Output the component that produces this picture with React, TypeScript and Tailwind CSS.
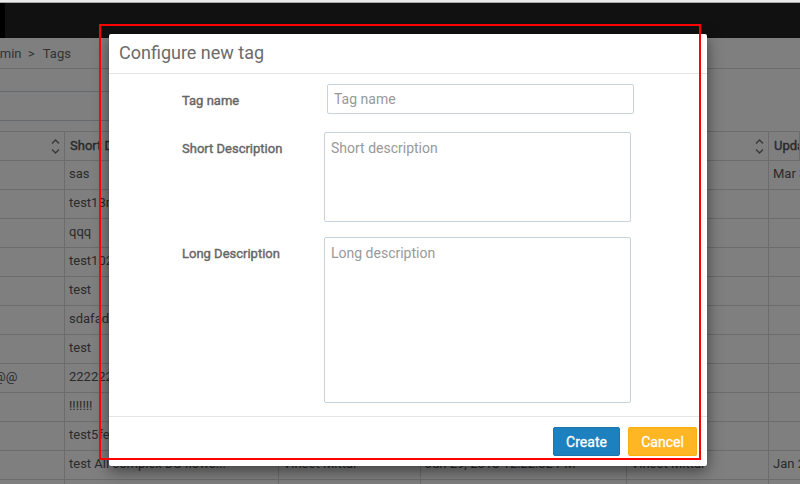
import type { ReactNode } from "react";

const descriptions = [
  "sas",
  "test13march",
  "qqq",
  "test102030",
  "test",
  "sdafadsfas",
  "test",
  "2222222222",
  "!!!!!!!",
  "test5feb",
  "test All complex DS flows...",
  "",
];

function SortIcon() {
  return (
    <svg width="9" height="15" viewBox="0 0 9 15" fill="none" stroke="#777" strokeWidth="1.5" aria-hidden="true">
      <path d="M1 4.5 4.5 1 8 4.5M1 10.5 4.5 14 8 10.5" />
    </svg>
  );
}

function HeadCell({ children, sortable = false }: { children?: ReactNode; sortable?: boolean }) {
  return (
    <th className="overflow-hidden border border-[#d8d8d8] pr-1 pl-[5px] text-left font-normal [-webkit-text-stroke:0.4px]">
      <div className="flex items-center justify-between">
        <span>{children}</span>
        {sortable && <SortIcon />}
      </div>
    </th>
  );
}

function Cell({ children }: { children?: ReactNode }) {
  return (
    <td className="overflow-hidden border border-[#d8d8d8] px-1 pb-0.5 first:pl-[9px] last:border-r-0">{children}</td>
  );
}

function Field({ id, label, children }: { id: string; label: string; children: ReactNode }) {
  return (
    <div className="flex items-start">
      <label
        htmlFor={id}
        className="w-[142px] shrink-0 pt-[9px] text-[13px] leading-4 text-[#666] [-webkit-text-stroke:0.4px]"
      >
        {label}
      </label>
      {children}
    </div>
  );
}

const control =
  "block w-[307px] resize-none rounded-xs border border-[#c8d3dd] bg-white px-1.5 text-sm text-[#555] placeholder:text-[#999] outline-none";

export default function App() {
  return (
    <div className="relative h-screen overflow-hidden bg-white font-[Roboto,sans-serif] text-[13px] text-[#666]">
      <div className="h-[3px] border-b border-[#aaa] bg-[#ebebeb]" />
      <div className="relative">
        <header className="h-[35px] border-l-5 border-black bg-[#222]" />
        <main className="-ml-4">
          <nav
            aria-label="Breadcrumb"
            className="flex h-[31px] items-center gap-2 border-b border-[#d8d8d8] pt-0.5"
          >
            <a href="#admin">Admin &nbsp;&gt;</a>
            <span>Tags</span>
          </nav>
          <input
            type="search"
            aria-label="Search tags"
            className="mt-[22px] mb-2.5 block h-[30px] w-[300px] border border-[#c8d3dd] outline-none"
          />
          <table className="w-full table-fixed border-collapse whitespace-nowrap text-[#555]">
            <colgroup>
              <col className="w-[80px]" />
              <col className="w-[214px]" />
              <col className="w-[142px]" />
              <col className="w-[206px]" />
              <col className="w-[142px]" />
              <col />
            </colgroup>
            <thead>
              <tr className="h-[29px]">
                <HeadCell sortable />
                <HeadCell sortable>Short Description</HeadCell>
                <HeadCell sortable />
                <HeadCell sortable />
                <HeadCell sortable />
                <HeadCell>Updated</HeadCell>
              </tr>
            </thead>
            <tbody>
              {descriptions.map((text, i) => (
                <tr key={i} className="h-[29px]">
                  <Cell>{i === 7 ? "@@" : ""}</Cell>
                  <Cell>{text}</Cell>
                  <Cell>{i === 10 ? "Vineet Mittal" : ""}</Cell>
                  <Cell>{i === 10 ? "Jun 29, 2018 12:22:52 PM" : ""}</Cell>
                  <Cell>{i === 10 ? "Vineet Mittal" : ""}</Cell>
                  <Cell>{i === 0 ? "Mar 3" : i === 10 ? "Jan 29" : ""}</Cell>
                </tr>
              ))}
            </tbody>
          </table>
        </main>
      </div>

      <div className="absolute inset-x-0 top-[3px] bottom-0 flex items-start justify-center bg-black/50 pt-[31px] pl-4">
        <section
          role="dialog"
          aria-labelledby="dialog-title"
          className="w-full max-w-[598px] rounded-xs bg-white shadow-[0_5px_15px_rgba(0,0,0,0.5)]"
        >
          <h1 id="dialog-title" className="border-b border-[#e5e5e5] px-2.5 pt-[5px] pb-[7px] text-lg leading-[27px] text-[#6b6b6b]">
            Configure new tag
          </h1>
          <form className="flex flex-col pt-2.5 pr-4 pb-[13px] pl-[73px]">
            <div className="mb-[18px]">
              <Field id="tag-name" label="Tag name">
                <input id="tag-name" placeholder="Tag name" className={control + " ml-[3px] h-[30px]"} />
              </Field>
            </div>
            <div className="mb-[15px]">
              <Field id="short-description" label="Short Description">
                <textarea
                  id="short-description"
                  placeholder="Short description"
                  className={control + " h-[90px] py-[5px]"}
                />
              </Field>
            </div>
            <Field id="long-description" label="Long Description">
              <textarea
                id="long-description"
                placeholder="Long description"
                className={control + " h-[166px] py-[5px]"}
              />
            </Field>
          </form>
          <footer className="flex justify-end gap-2 border-t border-[#e5e5e5] p-2.5 text-sm text-white [-webkit-text-stroke:0.3px]">
            <button type="button" className="h-[29px] w-[67px] rounded-xs border border-[#1b75ae] bg-[#1d80bf]">
              Create
            </button>
            <button type="button" className="h-[29px] w-[69px] rounded-xs border border-[#ffae0c] bg-[#ffb624]">
              Cancel
            </button>
          </footer>
        </section>
      </div>

      <div className="pointer-events-none absolute top-6 left-[99px] h-[436px] w-[602px] border-2 border-[#ff0000]" />
    </div>
  );
}
